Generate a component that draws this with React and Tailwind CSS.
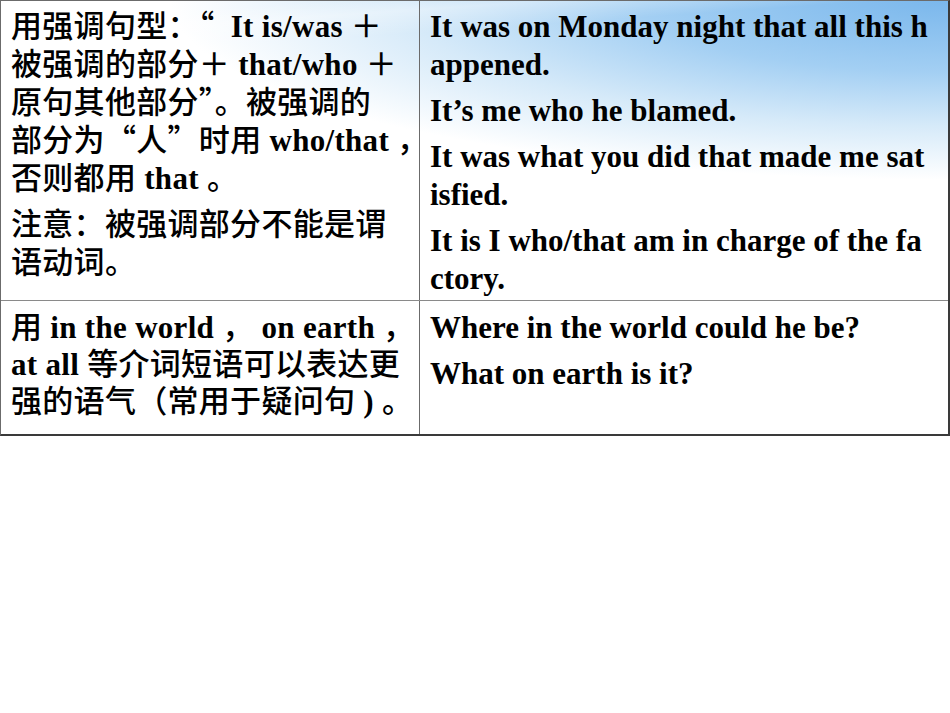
import React from "react";

const B = ({ children }) => <span className="font-bold">{children}</span>;
const Q = ({ children }) => <span className="font-['Noto_Sans_CJK_SC',sans-serif] leading-none">{children}</span>;

export default function App() {
  const cjk = "font-['Liberation_Serif','Noto_Sans_CJK_SC',serif]";
  return (
    <div className="relative w-[950px] h-[713px] overflow-hidden bg-white">
      <div className="absolute inset-0 bg-[radial-gradient(ellipse_780px_180px_at_100%_0%,#7ab7ec_0%,#a3cff3_40%,#d6eaf9_70%,rgba(255,255,255,0)_100%)]" />
      <div className="absolute inset-0 bg-[linear-gradient(176deg,rgba(255,255,255,0)_0%,rgba(255,255,255,0)_3%,rgba(255,255,255,0.35)_5%,rgba(255,255,255,0)_8%)]" />
      <div className={`relative w-[950px] ${cjk} text-[31px] leading-[38px] text-black`}>
        <div className="border-t border-l border-[#6b6b6b] border-r-2 border-r-[#3a3a3a] border-b-2 border-b-[#3a3a3a]">
          <div className="flex h-[300px] border-b border-[#8a8a8a]">
            <div className="w-[419px] shrink-0 border-r border-[#6b6b6b] pl-[10px] pt-[7px] whitespace-nowrap tracking-[0.3px] font-medium">
              <div>
                <div className="h-[38px]">用强调句型：<Q>“</Q>&nbsp; <B>It is/was</B> ＋</div>
                <div className="h-[38px]">被强调的部分＋ <B>that/who</B> ＋</div>
                <div className="h-[38px]">原句其他部分<Q>”</Q>。被强调的</div>
                <div className="h-[38px]">部分为<Q>“</Q>人<Q>”</Q>时用 <B>who/that</B> ，</div>
                <div className="h-[38px]">否则都用 <B>that</B> 。</div>
              </div>
              <div className="mt-[8px]">
                <div className="h-[38px]">注意：被强调部分不能是谓</div>
                <div className="h-[38px]">语动词。</div>
              </div>
            </div>
            <div className="flex-1 pl-[10px] pt-[7px] whitespace-nowrap font-bold">
              <div>
                <div>It was on Monday night that all this h</div>
                <div>appened.</div>
              </div>
              <div className="mt-[8px]">It’s me who he blamed.</div>
              <div className="mt-[8px]">
                <div>It was what you did that made me sat</div>
                <div>isfied.</div>
              </div>
              <div className="mt-[8px]">
                <div>It is I who/that am in charge of the fa</div>
                <div>ctory.</div>
              </div>
            </div>
          </div>
          <div className="flex h-[133px]">
            <div className="w-[419px] shrink-0 border-r border-[#6b6b6b] pl-[10px] pt-[8px] whitespace-nowrap leading-[37px] tracking-[0.3px] font-medium">
              <div className="h-[37px]">用 <B>in the world</B> ， <B>on earth</B> ，</div>
              <div className="h-[37px]"><B>at all</B> 等介词短语可以表达更</div>
              <div className="h-[37px]">强的语气（常用于疑问句 <B>)</B> 。</div>
            </div>
            <div className="flex-1 pl-[10px] pt-[8px] whitespace-nowrap font-bold">
              <div>Where in the world could he be?</div>
              <div className="mt-[8px]">What on earth is it?</div>
            </div>
          </div>
        </div>
      </div>
    </div>
  );
}
